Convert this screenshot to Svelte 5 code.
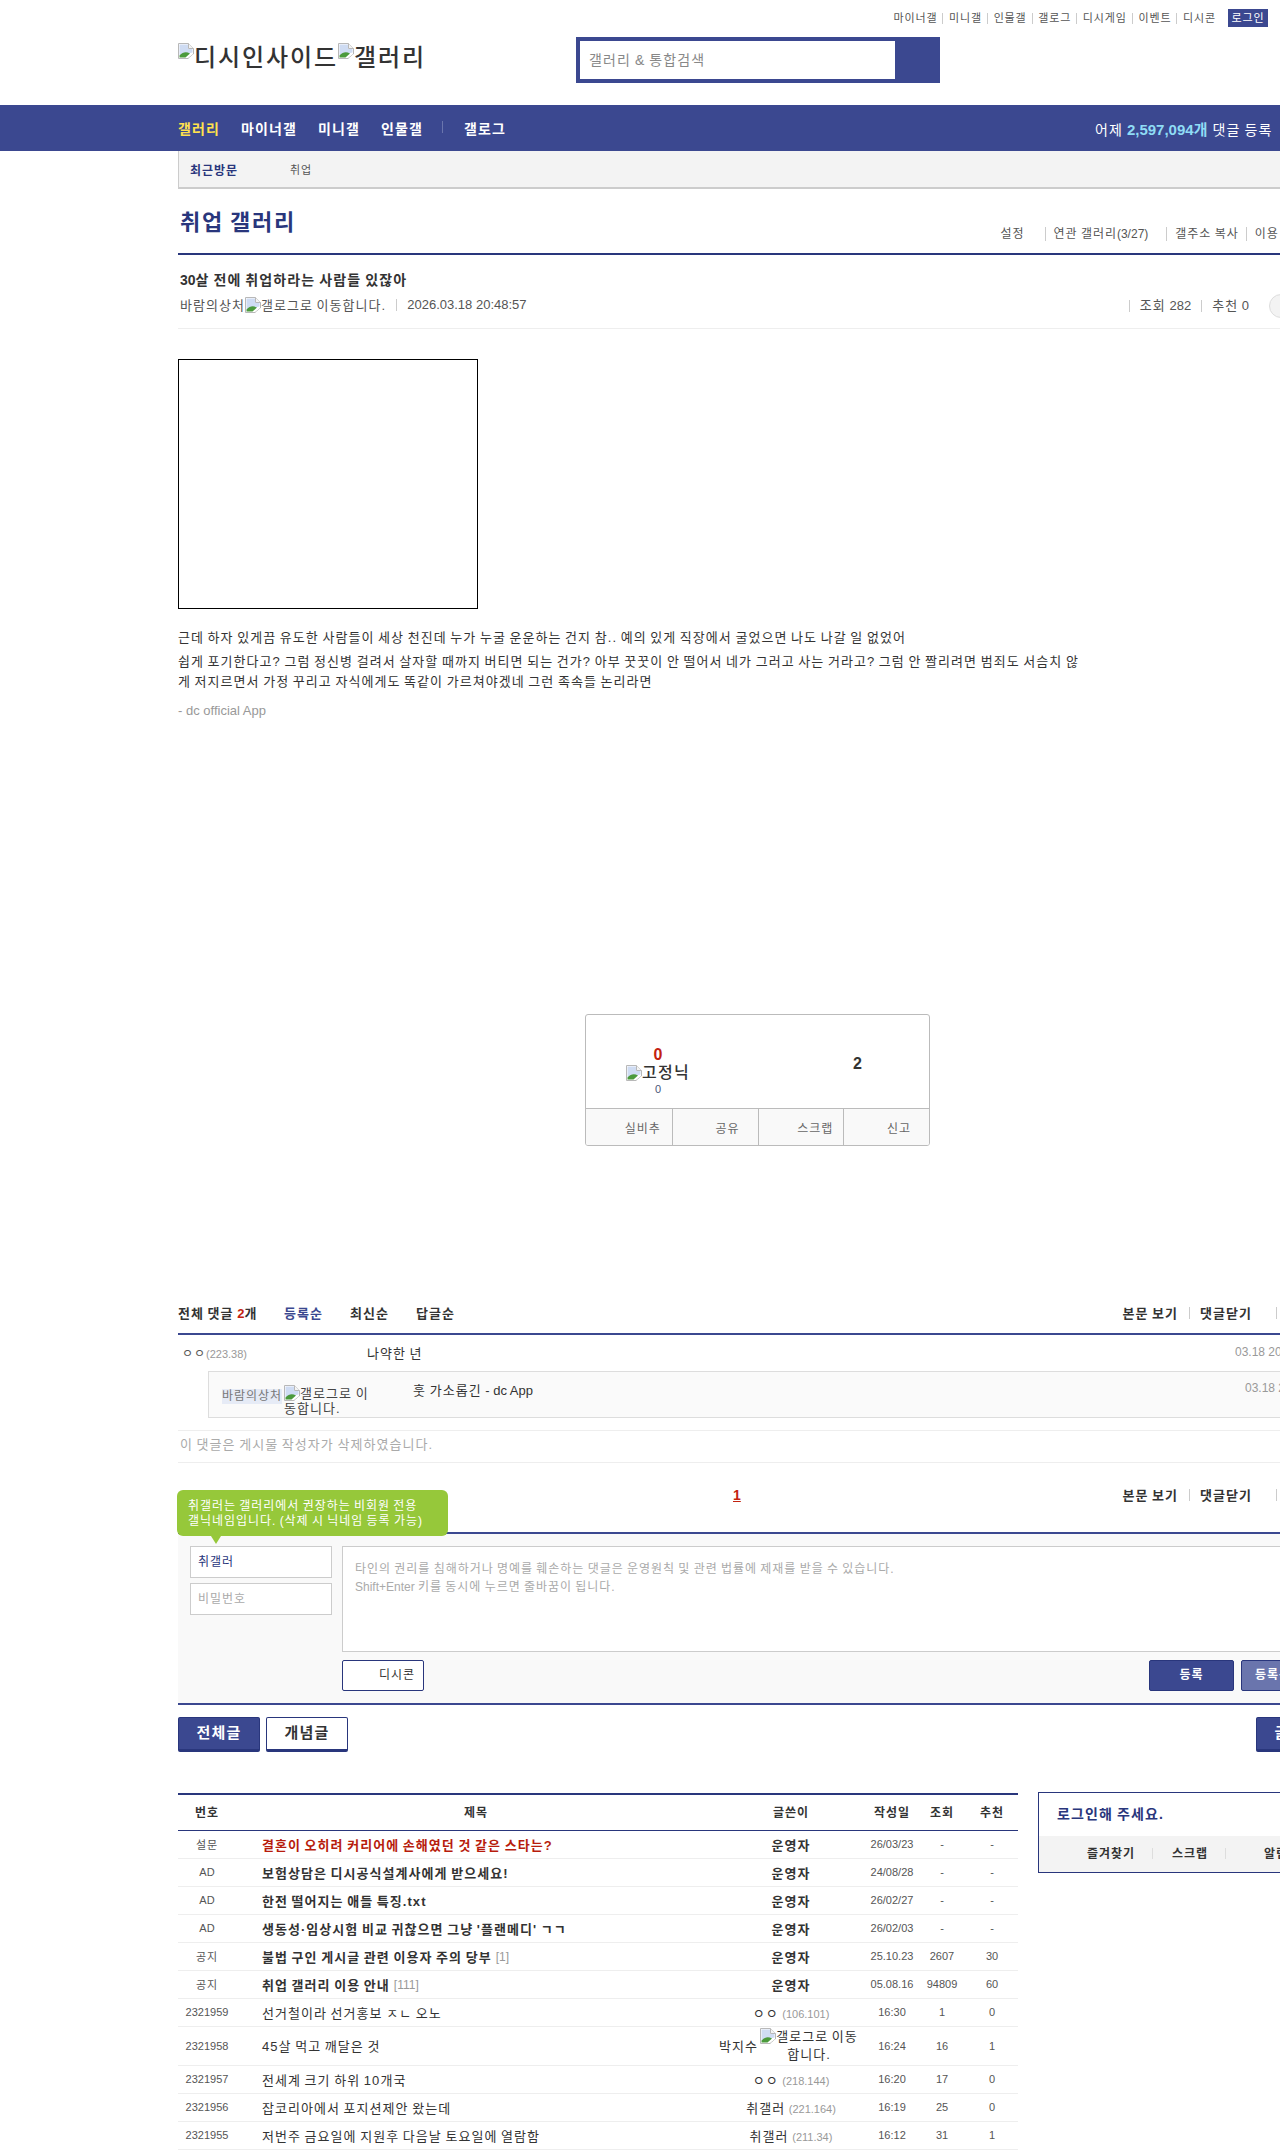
<script>
  const topLinks = ["마이너갤", "미니갤", "인물갤", "갤로그", "디시게임", "이벤트", "디시콘"];
  const notices = [
    { no: "설문", title: "결혼이 오히려 커리어에 손해였던 것 같은 스타는?", date: "26/03/23", hit: "-", rec: "-", red: true },
    { no: "AD", title: "보험상담은 디시공식설계사에게 받으세요!", date: "24/08/28", hit: "-", rec: "-" },
    { no: "AD", title: "한전 떨어지는 애들 특징.txt", date: "26/02/27", hit: "-", rec: "-" },
    { no: "AD", title: "생동성·임상시험 비교 귀찮으면 그냥 '플랜메디' ㄱㄱ", date: "26/02/03", hit: "-", rec: "-" },
    { no: "공지", title: "불법 구인 게시글 관련 이용자 주의 당부", reply: "[1]", date: "25.10.23", hit: "2607", rec: "30" },
    { no: "공지", title: "취업 갤러리 이용 안내", reply: "[111]", date: "05.08.16", hit: "94809", rec: "60" },
  ];
  const posts = [
    { no: "2321959", title: "선거철이라 선거홍보 ㅈㄴ 오노", name: "ㅇㅇ", ip: "(106.101)", date: "16:30", hit: "1", rec: "0" },
    { no: "2321958", title: "45살 먹고 깨달은 것", name: "박지수", fixed: true, date: "16:24", hit: "16", rec: "1" },
    { no: "2321957", title: "전세계 크기 하위 10개국", name: "ㅇㅇ", ip: "(218.144)", date: "16:20", hit: "17", rec: "0" },
    { no: "2321956", title: "잡코리아에서 포지션제안 왔는데", name: "취갤러", ip: "(221.164)", date: "16:19", hit: "25", rec: "0" },
    { no: "2321955", title: "저번주 금요일에 지원후 다음날 토요일에 열람함", name: "취갤러", ip: "(211.34)", date: "16:12", hit: "31", rec: "1" },
  ];
</script>

{#snippet broken()}
  <svg class="broken" width="16" height="16" viewBox="0 0 16 16" aria-hidden="true">
    <path d="M0.5 0.5H10.5L15.5 5.5V11L10 15.5H0.5Z" fill="#fff" stroke="#b8b8b8" />
    <path d="M1.5 1.5H10V6H14.5V9.5L1.5 12.5Z" fill="#cfdcf3" />
    <path d="M10.5 0.5V5.5H15.5" fill="#f4f4f4" stroke="#b8b8b8" />
    <path d="M1.5 14.5V12.5C5 9 8 8.5 12 10.5L7.5 14.5Z" fill="#4b9a3c" />
    <path d="M10.5 15.5L15.5 11V15.5Z" fill="#fff" />
  </svg>
{/snippet}

<div class="page">
  <header>
    <div class="gnb">
      {#each topLinks as l, i}
        <a class:first={i === 0}>{l}</a>
      {/each}
      <span class="login">로그인</span>
    </div>
    <div class="head">
      <div class="logo">{@render broken()}디시인사이드{@render broken()}갤러리</div>
      <div class="search">
        <div class="sinput">갤러리 &amp; 통합검색</div>
        <div class="sbtn"></div>
      </div>
    </div>
  </header>

  <nav class="nav">
    <ul>
      <li class="on">갤러리</li>
      <li>마이너갤</li>
      <li>미니갤</li>
      <li class="bar">인물갤</li>
      <li>갤로그</li>
    </ul>
    <p class="stat">어제 <b class="lat">2,597,094<i>개</i></b> 댓글 등록</p>
  </nav>

  <main>
    <div class="recent">
      <strong>최근방문</strong>
      <span>취업</span>
    </div>

    <div class="title-row">
      <h2>취업 갤러리</h2>
      <div class="tools">
        <span class="t1">설정</span>
        <span class="t2">연관 갤러리<i class="lat">(3/27)</i></span>
        <span class="t3">갤주소 복사</span>
        <span>이용 안내</span>
      </div>
    </div>

    <section class="view-head">
      <h3><i class="lat">30</i>살 전에 취업하라는 사람들 있잖아</h3>
      <div class="meta">
        <div class="who">
          <span>바람의상처</span>{@render broken()}<span>갤로그로 이동합니다.</span>
          <span class="date lat">2026.03.18 20:48:57</span>
        </div>
        <div class="counts">
          <span>조회 <i class="lat">282</i></span>
          <span>추천 <i class="lat">0</i></span>
          <i class="circle"></i>
        </div>
      </div>
    </section>

    <article>
      <div class="adbox"></div>
      <p class="p1">근데 하자 있게끔 유도한 사람들이 세상 천진데 누가 누굴 운운하는 건지 참.. 예의 있게 직장에서 굴었으면 나도 나갈 일 없었어</p>
      <p class="p2">쉽게 포기한다고? 그럼 정신병 걸려서 살자할 때까지 버티면 되는 건가? 아부 꿋꿋이 안 떨어서 네가 그러고 사는 거라고? 그럼 안 짤리려면 범죄도 서슴치 않게 저지르면서 가정 꾸리고 자식에게도 똑같이 가르쳐야겠네 그런 족속들 논리라면</p>
      <p class="sig lat">- dc official App</p>
    </article>

    <div class="reco">
      <div class="reco-top">
        <div class="up">
          <b class="n0 lat">0</b>
          <div class="fix">{@render broken()}고정닉</div>
          <span class="n1 lat">0</span>
        </div>
        <div class="down"><b class="lat">2</b></div>
      </div>
      <div class="reco-bot">
        <span>실비추</span><span>공유</span><span>스크랩</span><span>신고</span>
      </div>
    </div>

    <div class="cmt-head">
      <div class="sort">
        <span>전체 댓글 <em class="lat">2</em>개</span>
        <a class="cur">등록순</a><a>최신순</a><a>답글순</a>
      </div>
      <div class="cmt-opts"><span>본문 보기</span><span class="sep">댓글닫기</span><span class="sep far">새로고침</span></div>
    </div>

    <div class="cmt">
      <span class="cname">ㅇㅇ<small class="lat">(223.38)</small></span>
      <span class="ctext">나약한 년</span>
      <span class="cdate lat">03.18 20:51:12</span>
    </div>

    <div class="reply">
      <span class="rname">바람의상처</span>
      <span class="ralt">{@render broken()}갤로그로 이동합니다.</span>
      <span class="rtext">훗 가소롭긴 <i class="lat">- dc App</i></span>
      <span class="rdate lat">03.18 20:53:40</span>
    </div>

    <div class="deleted">이 댓글은 게시물 작성자가 삭제하였습니다.</div>

    <div class="pager">
      <a class="pg lat">1</a>
      <div class="cmt-opts abs"><span>본문 보기</span><span class="sep">댓글닫기</span><span class="sep far">새로고침</span></div>
      <div class="tip">취갤러는 갤러리에서 권장하는 비회원 전용<br />갤닉네임입니다. (삭제 시 닉네임 등록 가능)</div>
    </div>

    <div class="form">
      <div class="form-l">
        <div class="field nick">취갤러</div>
        <div class="field">비밀번호</div>
      </div>
      <div class="form-r">
        <div class="area">타인의 권리를 침해하거나 명예를 훼손하는 댓글은 운영원칙 및 관련 법률에 제재를 받을 수 있습니다.<br /><i class="lat">Shift+Enter</i> 키를 동시에 누르면 줄바꿈이 됩니다.</div>
        <div class="form-btns">
          <span class="dccon">디시콘</span>
          <span class="submit">등록</span>
          <span class="submit lite">등록+추천</span>
        </div>
      </div>
    </div>

    <div class="tabs">
      <span class="tab solid">전체글</span>
      <span class="tab">개념글</span>
      <span class="tab solid right">글쓰기</span>
    </div>

    <div class="lower">
      <table>
        <thead>
          <tr><th class="c-no">번호</th><th>제목</th><th class="c-w">글쓴이</th><th class="c-d">작성일</th><th class="c-h">조회</th><th class="c-r">추천</th></tr>
        </thead>
        <tbody>
          {#each notices as n}
            <tr>
              <td class="sm" class:kor={n.no !== "AD"}>{n.no}</td>
              <td class="tt strong" class:red={n.red}>{n.title}{#if n.reply}<span class="rc lat">{n.reply}</span>{/if}</td>
              <td class="wr strong">운영자</td>
              <td class="sm">{n.date}</td>
              <td class="sm">{n.hit}</td>
              <td class="sm">{n.rec}</td>
            </tr>
          {/each}
          {#each posts as p}
            <tr class:tall={p.fixed}>
              <td class="sm">{p.no}</td>
              <td class="tt">{p.title}</td>
              <td class="wr">
                {#if p.fixed}
                  <div class="fixed"><span>{p.name}</span><span class="alt">{@render broken()}갤로그로 이동합니다.</span></div>
                {:else}
                  {p.name} <small class="lat">{p.ip}</small>
                {/if}
              </td>
              <td class="sm">{p.date}</td>
              <td class="sm">{p.hit}</td>
              <td class="sm">{p.rec}</td>
            </tr>
          {/each}
        </tbody>
      </table>

      <aside>
        <div class="log-msg">로그인해 주세요.</div>
        <div class="log-links"><span>즐겨찾기</span><span class="ln">스크랩</span><span class="ln last">알림</span></div>
      </aside>
    </div>
  </main>
</div>

<style>
  :global(html), :global(body) {
    margin: 0;
    overflow: hidden;
  }

  .page {
    width: 1280px;
    height: 2153px;
    overflow: hidden;
    background: #fff;
    font-family: "Liberation Sans", "Noto Sans CJK KR", sans-serif;
    font-size: 12px;
    color: #333;
  }

  /* hangul here runs at a full em, Noto's is 0.92 */
  .page * {
    letter-spacing: 0.08em;
    word-spacing: -0.08em;
  }

  .page .lat {
    letter-spacing: 0;
    word-spacing: 0;
    font-style: normal;
  }

  i {
    font-style: normal;
  }

  .broken {
    display: inline-block;
    vertical-align: -3px;
    flex: none;
  }

  .gnb {
    display: flex;
    justify-content: flex-end;
    align-items: center;
    height: 18px;
    padding: 9px 12px 0 0;
    font-size: 11px;
    color: #555;
  }

  .gnb a {
    padding: 0 5px 0 5.6px;
    border-left: 1px solid #ccc;
    line-height: 11px;
  }

  .gnb a.first {
    border-left: 0;
  }

  .login {
    margin-left: 7px;
    width: 40px;
    height: 18px;
    line-height: 18px;
    text-align: center;
    background: #3b4890;
    color: #fff;
  }

  .head {
    display: flex;
    margin: 10px 0 0 178px;
    height: 46px;
  }

  .logo {
    width: 398px;
    font-size: 24px;
    font-weight: 500;
    line-height: 36px;
    padding-top: 3px;
    color: #333;
    white-space: nowrap;
  }

  .logo .broken {
    vertical-align: 7px;
  }

  .search {
    display: flex;
    width: 364px;
    height: 46px;
    box-sizing: border-box;
    border: 4px solid #3b4890;
    border-right: 0;
    background: #3b4890;
  }

  .sinput {
    width: 315px;
    background: #fff;
    padding-left: 9px;
    box-sizing: border-box;
    line-height: 38px;
    font-size: 14px;
    color: #888;
  }

  .nav {
    display: flex;
    justify-content: space-between;
    align-items: center;
    margin-top: 22px;
    height: 46px;
    padding-left: 178px;
    width: 1360px;
    box-sizing: border-box;
    background: #3b4890;
    color: #fff;
  }

  .nav ul {
    display: flex;
    margin: 0;
    padding: 0;
    list-style: none;
    font-size: 14px;
    font-weight: 700;
  }

  .nav li {
    margin-right: 21px;
  }

  .nav li.on {
    color: #ffe14d;
  }

  .nav li.bar {
    position: relative;
    margin-right: 41px;
  }

  .nav li.bar::after {
    content: "";
    position: absolute;
    right: -20px;
    top: 3px;
    height: 12px;
    border-right: 1px solid #6a75ad;
  }

  .stat {
    margin: 0;
    font-size: 14px;
    width: 265px;
    white-space: nowrap;
  }

  .stat b {
    font-size: 15px;
    color: #8fdcf5;
  }

  main {
    margin-left: 178px;
    width: 1160px;
  }

  .recent {
    display: flex;
    align-items: center;
    height: 36px;
    background: #f3f3f3;
    border-left: 1px solid #ccc;
    border-bottom: 2px solid #ccc;
    font-size: 12px;
  }

  .recent strong {
    margin-left: 11px;
    width: 100px;
    color: #29367c;
  }

  .recent span {
    color: #555;
    font-size: 11px;
  }

  .title-row {
    display: flex;
    justify-content: space-between;
    align-items: flex-end;
    height: 64px;
    border-bottom: 2px solid #29367c;
  }

  h2 {
    margin: 0 0 12px 2px;
    font-size: 22px;
    line-height: 36px;
    font-weight: 700;
    color: #29367c;
  }

  .tools {
    display: flex;
    margin: 0 24px 12px 0;
    font-size: 12px;
    color: #555;
    white-space: nowrap;
  }

  .tools span {
    padding: 0 8px;
    border-left: 1px solid #ccc;
    line-height: 14px;
  }

  .tools .t1 {
    border-left: 0;
    padding-right: 20px;
  }

  .tools .t2 {
    padding-right: 18px;
  }

  .tools .t3 {
    padding-right: 7px;
  }

  .view-head {
    height: 74px;
    border-bottom: 1px solid #eee;
    box-sizing: border-box;
  }

  h3 {
    margin: 0;
    padding: 16px 0 0 2px;
    font-size: 14px;
    line-height: 18px;
    color: #333;
  }

  .meta {
    display: flex;
    justify-content: space-between;
    padding: 7px 0 0 2px;
    line-height: 17px;
    font-size: 13px;
    color: #555;
  }

  .who {
    display: flex;
    align-items: center;
    height: 18px;
  }

  .date {
    margin-left: 10px;
    padding-left: 10px;
    border-left: 1px solid #ccc;
    line-height: 12px;
  }

  .counts {
    display: flex;
    align-items: center;
    margin-top: 1px;
    height: 18px;
  }

  .counts span {
    padding: 0 10px;
    border-left: 1px solid #ccc;
    line-height: 12px;
  }

  .circle {
    width: 24px;
    height: 24px;
    margin: 0 45px 0 10px;
    border-radius: 50%;
    border: 1px solid #ddd;
    background: #f3f3f3;
    box-sizing: border-box;
  }

  article {
    width: 905px;
    padding-top: 30px;
    font-size: 13px;
    line-height: 20px;
    color: #333;
    word-break: break-all;
  }

  .adbox {
    width: 300px;
    height: 250px;
    border: 1px solid #000;
    box-sizing: border-box;
    margin-bottom: 19px;
  }

  article p {
    margin: 0;
  }

  article .p2 {
    margin-top: 4px;
  }

  article .sig {
    margin-top: 9px;
    color: #999;
    font-size: 13px;
  }

  .reco {
    width: 345px;
    margin: 293px 0 0 407px;
    box-sizing: border-box;
    height: 132px;
    border: 1px solid #bbb;
    border-radius: 3px;
    overflow: hidden;
  }

  .reco-top {
    position: relative;
    height: 93px;
    border-bottom: 1px solid #bbb;
  }

  .up {
    display: flex;
    flex-direction: column;
    align-items: center;
    width: 144px;
    padding-top: 31px;
  }

  .n0 {
    font-size: 16px;
    line-height: 18px;
    color: #c3220f;
  }

  .fix {
    font-size: 16px;
    font-weight: 500;
    line-height: 18px;
  }

  .n1 {
    margin-top: 1px;
    font-size: 11px;
    line-height: 12px;
    color: #4a5578;
  }

  .down {
    position: absolute;
    left: 267px;
    top: 40px;
    font-size: 16px;
    line-height: 18px;
  }

  .reco-bot {
    display: grid;
    grid-template-columns: repeat(4, 1fr);
    height: 37px;
    background: #f9f9f9;
    font-size: 12px;
    color: #666;
  }

  .reco-bot span {
    text-align: right;
    padding-right: 18px;
    line-height: 40px;
    border-left: 1px solid #bbb;
  }

  .reco-bot span:first-child {
    border-left: 0;
    padding-right: 11px;
  }

  .reco-bot span:nth-child(3) {
    padding-right: 10px;
  }

  .cmt-head {
    display: flex;
    justify-content: space-between;
    align-items: flex-start;
    margin-top: 156px;
    height: 33px;
    box-sizing: border-box;
    line-height: 24px;
    border-bottom: 2px solid #3b4890;
    font-size: 13px;
    font-weight: 700;
  }

  .sort a {
    margin-left: 27px;
  }

  .sort span + a {
    margin-left: 23px;
  }

  .sort em {
    font-style: normal;
    color: #c3220f;
  }

  .sort .cur {
    color: #3b4890;
  }

  .cmt-opts {
    display: flex;
    font-size: 13px;
    font-weight: 700;
    white-space: nowrap;
  }

  .cmt-opts .sep {
    margin-left: 11px;
    padding-left: 11px;
    position: relative;
  }

  .cmt-opts .far {
    margin-left: 24px;
    padding-left: 10px;
  }

  .cmt-opts .sep::before {
    content: "";
    position: absolute;
    left: 0;
    top: 5px;
    height: 12px;
    border-left: 1px solid #ccc;
  }

  .cmt {
    position: relative;
    display: flex;
    align-items: center;
    height: 36px;
    padding-bottom: 2px;
    box-sizing: border-box;
  }

  .cname {
    margin-left: 4px;
    width: 185px;
    color: #555;
  }

  .cname small {
    font-size: 11px;
    color: #999;
  }

  .ctext {
    font-size: 13px;
    color: #333;
  }

  .cdate, .rdate {
    position: absolute;
    left: 1057px;
    font-size: 12px;
    color: #999;
    white-space: nowrap;
  }

  .reply {
    position: relative;
    display: flex;
    margin-left: 30px;
    height: 47px;
    box-sizing: border-box;
    background: #fafafa;
    border: 1px solid #ddd;
    border-right: 0;
    font-size: 13px;
  }

  .rname {
    align-self: flex-start;
    margin: 17px 2px 0 13px;
    background: #e6ebf6;
    color: #777;
    line-height: 15px;
    height: 15px;
    font-size: 12px;
  }

  .ralt {
    width: 90px;
    margin-top: 13px;
    line-height: 15px;
    flex: none;
    color: #444;
  }

  .rtext {
    margin: 10px 0 0 39px;
    line-height: 18px;
  }

  .rdate {
    left: 1036px;
    top: 9px;
  }

  .deleted {
    margin-top: 12px;
    border-top: 1px solid #eee;
    border-bottom: 1px solid #eee;
    height: 33px;
    box-sizing: border-box;
    padding-left: 2px;
    line-height: 27px;
    font-size: 13px;
    color: #aaa;
  }

  .pager {
    position: relative;
    height: 71px;
    border-bottom: 2px solid #3b4890;
    box-sizing: border-box;
  }

  .pg {
    position: absolute;
    left: 555px;
    top: 24px;
    font-size: 14px;
    font-weight: 700;
    color: #c3220f;
    text-decoration: underline;
  }

  .abs {
    position: absolute;
    right: 0;
    top: 21px;
    line-height: 24px;
  }

  .tip {
    position: absolute;
    left: -1px;
    top: 27px;
    width: 271px;
    height: 46px;
    box-sizing: border-box;
    padding: 9px 0 0 11px;
    background: #96c83a;
    border-radius: 6px;
    color: #fff;
    font-size: 12px;
    line-height: 15px;
    z-index: 1;
  }

  .tip::after {
    content: "";
    position: absolute;
    left: 34px;
    bottom: -8px;
    border: 5px solid transparent;
    border-top: 8px solid #96c83a;
    border-bottom: 0;
  }

  .form {
    display: flex;
    height: 171px;
    box-sizing: border-box;
    padding: 12px 0 0 12px;
    background: #f9f9f9;
    border-bottom: 2px solid #3b4890;
  }

  .form-l {
    width: 152px;
    flex: none;
  }

  .field {
    box-sizing: border-box;
    width: 142px;
    height: 32px;
    margin-bottom: 5px;
    background: #fff;
    border: 1px solid #ccc;
    padding-left: 7px;
    line-height: 30px;
    color: #aaa;
    font-size: 12px;
  }

  .nick {
    color: #29367c;
  }

  .form-r {
    flex: 1;
  }

  .area {
    box-sizing: border-box;
    height: 106px;
    background: #fff;
    border: 1px solid #ccc;
    padding: 13px 12px;
    line-height: 18px;
    font-size: 12px;
    color: #aaa;
  }

  .form-btns {
    display: flex;
    margin-top: 8px;
    height: 31px;
  }

  .dccon {
    box-sizing: border-box;
    width: 82px;
    border: 1px solid #29367c;
    border-radius: 2px;
    background: #fff;
    text-align: right;
    padding-right: 8px;
    line-height: 29px;
  }

  .submit {
    box-sizing: border-box;
    width: 85px;
    margin-left: auto;
    background: #3b4890;
    border: 1px solid #29367c;
    border-radius: 2px;
    color: #fff;
    font-weight: 700;
    text-align: center;
    line-height: 29px;
  }

  .submit.lite {
    margin-left: 7px;
    background: #6a75ad;
    width: 97px;
    text-align: left;
    padding-left: 13px;
    white-space: nowrap;
  }

  .tabs {
    display: flex;
    gap: 6px;
    margin-top: 12px;
    height: 35px;
  }

  .tab {
    box-sizing: border-box;
    width: 82px;
    border: 1px solid #29367c;
    border-bottom-width: 3px;
    border-radius: 2px;
    background: #fff;
    color: #333;
    text-align: center;
    font-size: 15px;
    font-weight: 700;
    line-height: 30px;
  }

  .tab.solid {
    background: #3b4890;
    color: #fff;
  }

  .tab.right {
    margin-left: auto;
  }

  .lower {
    display: flex;
    align-items: flex-start;
    margin-top: 41px;
  }

  table {
    width: 840px;
    flex: none;
    border-collapse: collapse;
    table-layout: fixed;
    border-top: 2px solid #29367c;
  }

  th {
    height: 36px;
    padding: 0 0 2px;
    font-size: 12px;
    border-bottom: 1px solid #29367c;
    box-sizing: border-box;
  }

  .c-no { width: 58px; }
  .c-w { width: 150px; }
  .c-d { width: 52px; }
  .c-h { width: 48px; }
  .c-r { width: 52px; }

  td {
    height: 27px;
    padding: 0;
    text-align: center;
    font-size: 13px;
    border-bottom: 1px solid #eee;
    white-space: nowrap;
  }

  tr.tall td {
    height: 38px;
  }

  .page td.sm {
    font-size: 11px;
    color: #555;
    letter-spacing: 0;
  }

  .page td.kor {
    letter-spacing: 0.08em;
  }

  td.tt {
    text-align: left;
    padding-left: 26px;
  }

  .strong {
    font-weight: 700;
  }

  .red {
    color: #b71c0c;
  }

  .rc {
    margin-left: 4px;
    font-weight: 400;
    font-size: 12px;
    color: #999;
    vertical-align: 1px;
  }

  .wr small {
    font-size: 11px;
    color: #999;
  }

  .fixed {
    display: flex;
    align-items: center;
    padding-left: 3px;
    white-space: normal;
  }

  .alt {
    width: 102px;
    text-align: center;
    line-height: 18px;
  }

  aside {
    margin-left: 20px;
    width: 300px;
    flex: none;
    height: 81px;
    box-sizing: border-box;
    border: 1px solid #29367c;
    margin-top: -1px;
  }

  .log-msg {
    height: 43px;
    padding-left: 18px;
    line-height: 43px;
    font-size: 14px;
    font-weight: 700;
    color: #29367c;
  }

  .log-links {
    display: flex;
    height: 36px;
    padding-left: 48px;
    background: #f3f3f3;
    font-weight: 700;
    line-height: 36px;
  }

  .ln {
    position: relative;
    margin-left: 37px;
  }

  .ln::before {
    content: "";
    position: absolute;
    left: -20px;
    top: 12px;
    height: 11px;
    border-left: 1px solid #ddd;
  }

  .ln.last {
    margin-left: 56px;
  }

  .ln.last::before {
    left: -39px;
  }
</style>
